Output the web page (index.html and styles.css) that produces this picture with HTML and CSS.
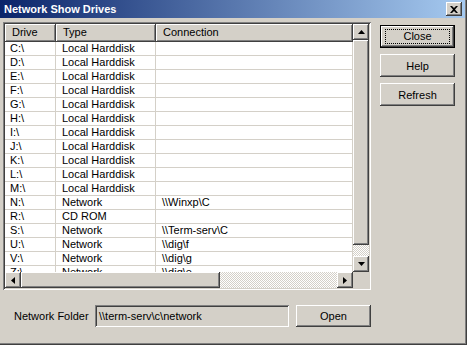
FILE: index.html
```html
<!DOCTYPE html>
<html lang="en">
<head>
    <meta charset="UTF-8">
    <title>Network Show Drives</title>
    <link rel="stylesheet" href="styles.css">
</head>
<body>

<div class="window">
    <div class="titlebar">
        <span class="title">Network Show Drives</span>
        <div class="title-close">
            <svg width="8" height="7" viewBox="0 0 8 7"><path d="M0 0h2l2 2 2-2h2L5 3.5 8 7H6L4 5 2 7H0l3-3.5z" fill="#000"/></svg>
        </div>
    </div>

    <div class="content">
        <div class="main">
            <div class="listview">
                <div class="list-area">
                    <div class="list-body">
                        <div class="list-header">
                            <div class="hcell col-drive">Drive</div>
                            <div class="hcell col-type">Type</div>
                            <div class="hcell col-conn">Connection</div>
                        </div>
                        <div class="rows">
                            <div class="row"><div class="cell col-drive">C:\</div><div class="cell col-type">Local Harddisk</div><div class="cell col-conn"></div></div>
                            <div class="row"><div class="cell col-drive">D:\</div><div class="cell col-type">Local Harddisk</div><div class="cell col-conn"></div></div>
                            <div class="row"><div class="cell col-drive">E:\</div><div class="cell col-type">Local Harddisk</div><div class="cell col-conn"></div></div>
                            <div class="row"><div class="cell col-drive">F:\</div><div class="cell col-type">Local Harddisk</div><div class="cell col-conn"></div></div>
                            <div class="row"><div class="cell col-drive">G:\</div><div class="cell col-type">Local Harddisk</div><div class="cell col-conn"></div></div>
                            <div class="row"><div class="cell col-drive">H:\</div><div class="cell col-type">Local Harddisk</div><div class="cell col-conn"></div></div>
                            <div class="row"><div class="cell col-drive">I:\</div><div class="cell col-type">Local Harddisk</div><div class="cell col-conn"></div></div>
                            <div class="row"><div class="cell col-drive">J:\</div><div class="cell col-type">Local Harddisk</div><div class="cell col-conn"></div></div>
                            <div class="row"><div class="cell col-drive">K:\</div><div class="cell col-type">Local Harddisk</div><div class="cell col-conn"></div></div>
                            <div class="row"><div class="cell col-drive">L:\</div><div class="cell col-type">Local Harddisk</div><div class="cell col-conn"></div></div>
                            <div class="row"><div class="cell col-drive">M:\</div><div class="cell col-type">Local Harddisk</div><div class="cell col-conn"></div></div>
                            <div class="row"><div class="cell col-drive">N:\</div><div class="cell col-type">Network</div><div class="cell col-conn">\\Winxp\C</div></div>
                            <div class="row"><div class="cell col-drive">R:\</div><div class="cell col-type">CD ROM</div><div class="cell col-conn"></div></div>
                            <div class="row"><div class="cell col-drive">S:\</div><div class="cell col-type">Network</div><div class="cell col-conn">\\Term-serv\C</div></div>
                            <div class="row"><div class="cell col-drive">U:\</div><div class="cell col-type">Network</div><div class="cell col-conn">\\dig\f</div></div>
                            <div class="row"><div class="cell col-drive">V:\</div><div class="cell col-type">Network</div><div class="cell col-conn">\\dig\g</div></div>
                            <div class="row"><div class="cell col-drive">Z:\</div><div class="cell col-type">Network</div><div class="cell col-conn">\\dig\e</div></div>
                        </div>
                    </div>

                    <!-- vertical scrollbar -->
                    <div class="vscroll">
                        <div class="sb-btn">
                            <svg width="7" height="4" viewBox="0 0 7 4"><polygon points="3.5,0 7,4 0,4" fill="#000"/></svg>
                        </div>
                        <div class="sb-thumb v-thumb"></div>
                        <div class="sb-track"></div>
                        <div class="sb-btn">
                            <svg width="7" height="4" viewBox="0 0 7 4"><polygon points="0,0 7,0 3.5,4" fill="#000"/></svg>
                        </div>
                    </div>
                </div>

                <!-- horizontal scrollbar -->
                <div class="hscroll-row">
                    <div class="hscroll">
                        <div class="sb-btn">
                            <svg width="4" height="7" viewBox="0 0 4 7"><polygon points="4,0 4,7 0,3.5" fill="#000"/></svg>
                        </div>
                        <div class="sb-thumb h-thumb"></div>
                        <div class="sb-track"></div>
                        <div class="sb-btn">
                            <svg width="4" height="7" viewBox="0 0 4 7"><polygon points="0,0 4,3.5 0,7" fill="#000"/></svg>
                        </div>
                    </div>
                    <div class="sb-corner"></div>
                </div>
            </div>

            <div class="side-buttons">
                <div class="btn btn-default"><span class="focus">Close</span></div>
                <div class="btn">Help</div>
                <div class="btn">Refresh</div>
            </div>
        </div>

        <div class="folder-row">
            <span class="folder-label">Network Folder</span>
            <div class="folder-field">\\term-serv\c\network</div>
            <div class="btn btn-open">Open</div>
        </div>
    </div>
</div>

</body>
</html>
```

FILE: styles.css
```css
body {
    margin: 0;
    padding: 0;
    background-color: #d4d0c8;
    font-family: "Liberation Sans", Arial, sans-serif;
    font-size: 11px;
    color: #000;
}

.window {
    width: 467px;
    height: 345px;
    box-sizing: border-box;
    background-color: #d4d0c8;
    box-shadow: inset -1px -1px #404040, inset -2px -2px #808080;
    overflow: hidden;
}

/* title bar */
.titlebar {
    height: 18px;
    display: flex;
    align-items: center;
    justify-content: space-between;
    padding: 0 3px 0 3px;
    margin-right: 2px;
    background: linear-gradient(to right, #0a246a, #a6caf0);
}

.title {
    color: #fff;
    font-weight: bold;
    font-size: 11px;
    padding-left: 1px;
}

.title-close {
    width: 16px;
    height: 14px;
    box-sizing: border-box;
    display: flex;
    align-items: center;
    justify-content: center;
    background-color: #d4d0c8;
    box-shadow: inset -1px -1px #404040, inset 1px 1px #fff, inset -2px -2px #808080;
}

.content {
    padding: 4px 0 0 3px;
}

.main {
    display: flex;
    align-items: flex-start;
}

/* list view */
.listview {
    width: 368px;
    height: 268px;
    box-sizing: border-box;
    padding: 2px;
    box-shadow: inset 1px 1px #808080, inset -1px -1px #fff, inset 2px 2px #404040, inset -2px -2px #d4d0c8;
    background-color: #fff;
    display: flex;
    flex-direction: column;
}

.list-area {
    display: flex;
    height: 248px;
}

.list-body {
    width: 348px;
    overflow: hidden;
    background-color: #fff;
}

.list-header {
    display: flex;
    height: 18px;
}

.hcell {
    box-sizing: border-box;
    height: 18px;
    line-height: 17px;
    padding-left: 7px;
    background-color: #d4d0c8;
    box-shadow: inset -1px -1px #404040, inset 1px 1px #fff, inset -2px -2px #808080;
}

.col-drive {
    width: 51px;
    flex: none;
}

.col-type {
    width: 100px;
    flex: none;
}

.col-conn {
    flex: 1;
}

.row {
    display: flex;
    height: 14px;
    box-sizing: border-box;
    border-bottom: 1px solid #d4d0c8;
}

.cell {
    box-sizing: border-box;
    line-height: 13px;
    padding-left: 5px;
    border-right: 1px solid #d4d0c8;
    white-space: nowrap;
}

.row .col-type,
.row .col-conn {
    padding-left: 6px;
}

/* scrollbars */
.vscroll {
    width: 16px;
    display: flex;
    flex-direction: column;
}

.sb-btn {
    width: 16px;
    height: 16px;
    flex: none;
    box-sizing: border-box;
    display: flex;
    align-items: center;
    justify-content: center;
    background-color: #d4d0c8;
    box-shadow: inset -1px -1px #404040, inset 1px 1px #fff, inset -2px -2px #808080;
}

.sb-thumb {
    flex: none;
    background-color: #d4d0c8;
    box-shadow: inset -1px -1px #404040, inset 1px 1px #fff, inset -2px -2px #808080;
}

.v-thumb {
    height: 205px;
}

.h-thumb {
    width: 199px;
}

.sb-track {
    flex: 1;
    background-color: #d4d0c8;
    background-image: repeating-conic-gradient(#fff 0 25%, #d4d0c8 0 50%);
    background-size: 2px 2px;
}

.hscroll-row {
    display: flex;
    height: 16px;
}

.hscroll {
    width: 348px;
    display: flex;
}

.sb-corner {
    width: 16px;
    background-color: #d4d0c8;
}

/* buttons */
.side-buttons {
    display: flex;
    flex-direction: column;
    gap: 6px;
    margin: 3px 0 0 9px;
}

.btn {
    width: 75px;
    height: 23px;
    box-sizing: border-box;
    display: flex;
    align-items: center;
    justify-content: center;
    background-color: #d4d0c8;
    box-shadow: inset -1px -1px #404040, inset 1px 1px #fff, inset -2px -2px #808080;
}

.btn-default {
    border: 1px solid #000;
    box-shadow: inset -1px -1px #404040, inset 1px 1px #fff, inset -2px -2px #808080;
}

.focus {
    box-sizing: border-box;
    width: 65px;
    height: 15px;
    line-height: 13px;
    text-align: center;
    border: 1px dotted #000;
}

/* bottom row */
.folder-row {
    display: flex;
    align-items: center;
    margin-top: 15px;
    padding-left: 11px;
}

.folder-label {
    width: 81px;
}

.folder-field {
    width: 194px;
    height: 22px;
    box-sizing: border-box;
    line-height: 22px;
    padding-left: 4px;
    background-color: #d4d0c8;
    box-shadow: inset 1px 1px #808080, inset -1px -1px #fff, inset 2px 2px #404040, inset -2px -2px #d4d0c8;
}

.btn-open {
    height: 22px;
    margin-left: 7px;
}
```
